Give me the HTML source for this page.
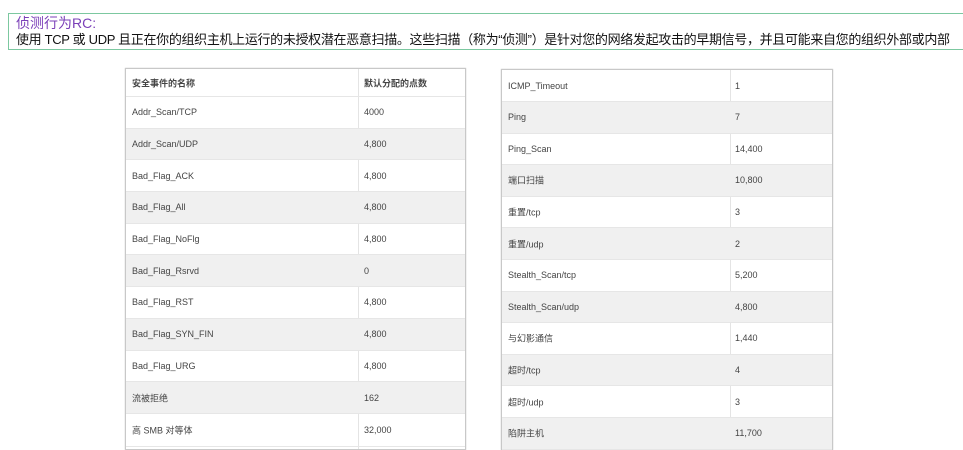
<!DOCTYPE html>
<html><head><meta charset="utf-8"><style>
body{margin:0;width:963px;height:450px;background:#fff;position:relative;overflow:hidden;font-family:"Liberation Sans","Noto Sans CJK SC",sans-serif}
.banner{position:absolute;left:8px;top:13px;width:956px;height:37px;border:1px solid #7cc8a0;border-right:none;box-sizing:border-box}
.t1{position:absolute;left:16px;top:15px;font-size:14px;color:#7a3fb8;line-height:16px}
.t2{position:absolute;left:16px;top:32px;font-size:13px;color:#111;line-height:16px;white-space:nowrap;letter-spacing:-0.33px}
.tbl{position:absolute;border:1px solid #c8c8c8;box-shadow:0 0 1px #bbb;box-sizing:border-box}
.row{position:relative;font-size:9px;color:#444;border-bottom:1px solid #e6e6e6;box-sizing:border-box}
.row span{position:absolute;top:50%;transform:translateY(-50%);white-space:nowrap}
.g{background:#f0f0f0}
.div{position:absolute;top:0;bottom:0;width:1px;background:#e4e4e4}
</style></head><body>
<div class="banner"></div>
<div class="t1">侦测行为RC:</div>
<div class="t2">使用 TCP 或 UDP 且正在你的组织主机上运行的未授权潜在恶意扫描。这些扫描（称为“侦测”）是针对您的网络发起攻击的早期信号，并且可能来自您的组织外部或内部</div>

<div class="tbl" style="left:125px;top:68px;width:341px;height:382px">
<div class="div" style="left:232px"></div>
<div class="row" style="height:28px;font-weight:bold"><span style="left:6px">安全事件的名称</span><span style="left:238px">默认分配的点数</span></div>
<div class="row" style="height:31.7px"><span style="left:6px">Addr_Scan/TCP</span><span style="left:238px">4000</span></div>
<div class="row g" style="height:31.7px"><span style="left:6px">Addr_Scan/UDP</span><span style="left:238px">4,800</span></div>
<div class="row" style="height:31.7px"><span style="left:6px">Bad_Flag_ACK</span><span style="left:238px">4,800</span></div>
<div class="row g" style="height:31.7px"><span style="left:6px">Bad_Flag_All</span><span style="left:238px">4,800</span></div>
<div class="row" style="height:31.7px"><span style="left:6px">Bad_Flag_NoFlg</span><span style="left:238px">4,800</span></div>
<div class="row g" style="height:31.7px"><span style="left:6px">Bad_Flag_Rsrvd</span><span style="left:238px">0</span></div>
<div class="row" style="height:31.7px"><span style="left:6px">Bad_Flag_RST</span><span style="left:238px">4,800</span></div>
<div class="row g" style="height:31.7px"><span style="left:6px">Bad_Flag_SYN_FIN</span><span style="left:238px">4,800</span></div>
<div class="row" style="height:31.7px"><span style="left:6px">Bad_Flag_URG</span><span style="left:238px">4,800</span></div>
<div class="row g" style="height:31.7px"><span style="left:6px">流被拒绝</span><span style="left:238px">162</span></div>
<div class="row" style="height:33px"><span style="left:6px">高 SMB 对等体</span><span style="left:238px">32,000</span></div>
</div>

<div class="tbl" style="left:501px;top:69px;width:332px;height:381px">
<div class="div" style="left:228px"></div>
<div class="row" style="height:32px"><span style="left:6px">ICMP_Timeout</span><span style="left:233px">1</span></div>
<div class="row g" style="height:31.6px"><span style="left:6px">Ping</span><span style="left:233px">7</span></div>
<div class="row" style="height:31.6px"><span style="left:6px">Ping_Scan</span><span style="left:233px">14,400</span></div>
<div class="row g" style="height:31.6px"><span style="left:6px">端口扫描</span><span style="left:233px">10,800</span></div>
<div class="row" style="height:31.6px"><span style="left:6px">重置/tcp</span><span style="left:233px">3</span></div>
<div class="row g" style="height:31.6px"><span style="left:6px">重置/udp</span><span style="left:233px">2</span></div>
<div class="row" style="height:31.6px"><span style="left:6px">Stealth_Scan/tcp</span><span style="left:233px">5,200</span></div>
<div class="row g" style="height:31.6px"><span style="left:6px">Stealth_Scan/udp</span><span style="left:233px">4,800</span></div>
<div class="row" style="height:31.6px"><span style="left:6px">与幻影通信</span><span style="left:233px">1,440</span></div>
<div class="row g" style="height:31.6px"><span style="left:6px">超时/tcp</span><span style="left:233px">4</span></div>
<div class="row" style="height:31.6px"><span style="left:6px">超时/udp</span><span style="left:233px">3</span></div>
<div class="row g" style="height:32px"><span style="left:6px">陷阱主机</span><span style="left:233px">11,700</span></div>
</div>
</body></html>
